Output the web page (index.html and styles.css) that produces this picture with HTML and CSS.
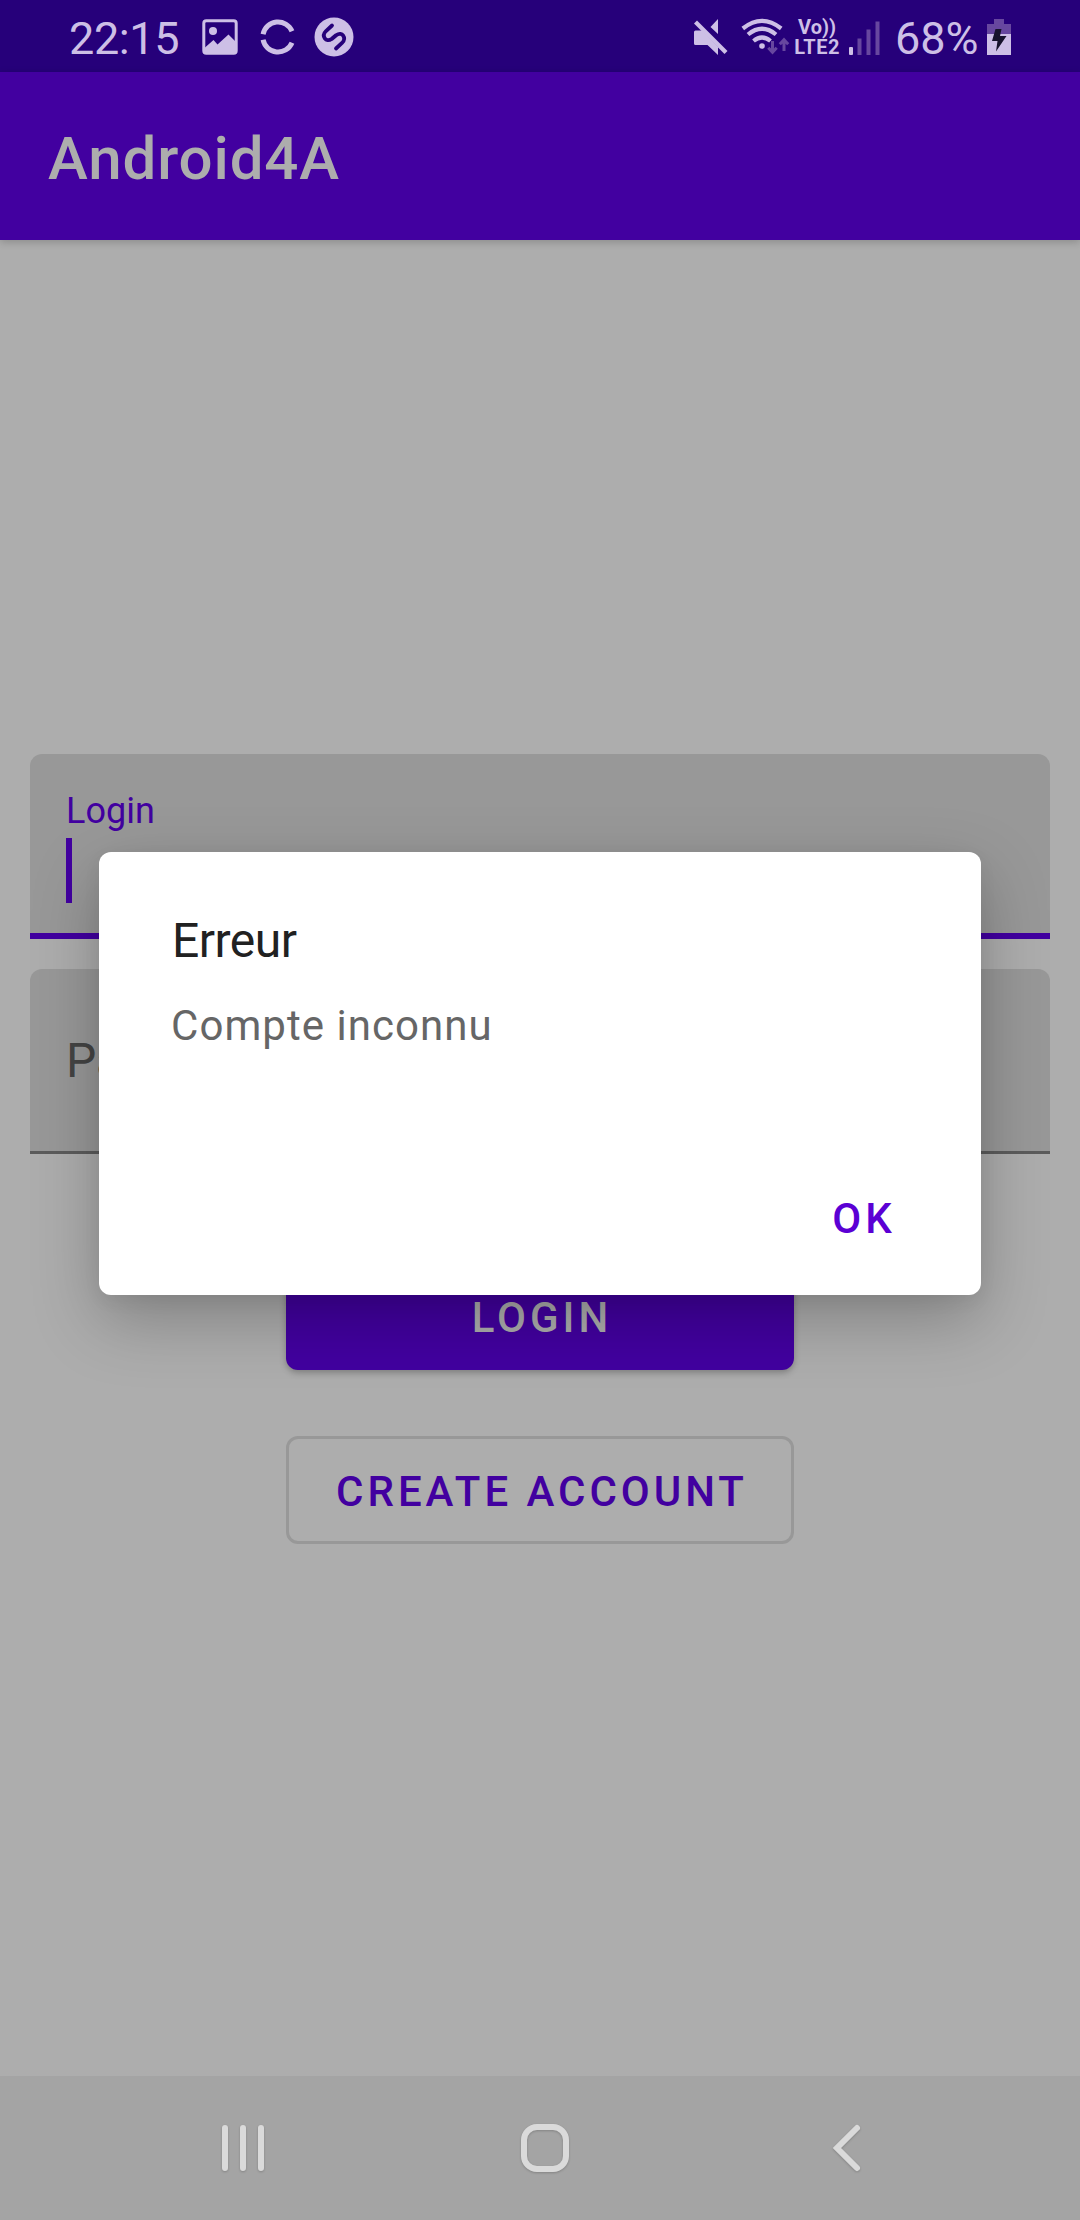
FILE: index.html
```html
<!DOCTYPE html>
<html lang="fr">
<head>
<meta charset="utf-8">
<title>Android4A</title>
<link rel="stylesheet" href="styles.css">
</head>
<body>
<div class="screen">
  <header class="status-bar">
    <div class="status-left">
      <span class="clock">22:15</span>
      <svg class="icon-picture" width="36" height="36" viewBox="0 0 36 36">
        <rect x="1.8" y="1.8" width="32.4" height="32.4" rx="2.5" fill="none" stroke="currentColor" stroke-width="3"/>
        <circle cx="11" cy="12" r="4" fill="currentColor"/>
        <path d="M3 28.500l8.500-7.500 4 4.500L26.500 15.500l7 7V34H3z" fill="currentColor"/>
      </svg>
      <svg class="icon-sync" width="36" height="36" viewBox="0 0 36 36" fill="none" stroke="currentColor" stroke-width="5">
        <path d="M3.100 15.200A15.200 15.200 0 0 1 32 12.200"/>
        <path d="M3.100 20.800A15.200 15.200 0 0 0 32 23.800"/>
      </svg>
      <svg class="icon-music" width="40" height="40" viewBox="0 0 40 40">
        <circle cx="20" cy="20" r="19.500" fill="currentColor"/>
        <path d="M18 8.500L12 14C7 19 12 26 17.500 22L22 18.200M22 31.500L28 26C33 21 28 14 22.500 18L18 21.800" fill="none" stroke="#26007a" stroke-width="3.800" stroke-linecap="round"/>
      </svg>
    </div>
    <div class="status-right">
      <svg class="icon-mute" width="36" height="36" viewBox="0 0 36 36" fill="currentColor">
        <path d="M2.500 11.500h7L25 28v8L14.500 26h-12Q1 26 1 24.500v-11.500Q1 11.500 2.500 11.500zM17.500 8L25 0v15z"/>
        <path d="M2.500 3L33 33.500" stroke="currentColor" stroke-width="4.200"/>
      </svg>
      <svg class="icon-wifi" width="49" height="37" viewBox="0 0 49 37" fill="none" stroke="currentColor" stroke-width="4.200">
        <path d="M1.800 10.500Q21 -4.700 40.200 10.500M7 16.500Q21 5 35 16.500M12.500 23Q21 16 29.500 23"/>
        <circle cx="21" cy="28" r="2.800" fill="currentColor" stroke="none"/>
        <path d="M31.500 23v11M27.300 29.800l4.200 4.500 4.200-4.500M43 33V22M38.800 26.200l4.200-4.500 4.200 4.500" stroke="#67479f" stroke-width="3"/>
      </svg>
      <div class="volte"><span>Vo))</span><span class="volte-network">LTE2</span></div>
      <svg class="icon-signal" width="32" height="36" viewBox="0 0 32 36">
        <rect x="0" y="28" width="4" height="8" rx="1" fill="currentColor"/>
        <path d="M8.500 19.500h4V36h-4zM17.500 10.500h4V36h-4zM26.500 2.500h4V36h-4z" fill="#67479f"/>
      </svg>
      <span class="battery-level">68%</span>
      <svg class="icon-battery" width="24" height="36" viewBox="0 0 24 36">
        <path d="M7 0h10v5h7v10H0V5h7z" fill="#67479f"/>
        <path d="M0 15h24v21H0z" fill="currentColor"/>
        <path d="M8.500 10h6l-1.500 7h6.500L9 32.500 10.500 22H5z" fill="#17132c"/>
      </svg>
    </div>
  </header>

  <div class="app-bar"><h1>Android4A</h1></div>

  <main class="content">
    <div class="field field-focused">
      <label>Login</label>
      <i class="caret"></i>
    </div>
    <div class="field field-empty"><label>Password</label></div>
    <button class="button button-filled">LOGIN</button>
    <button class="button button-outlined">CREATE ACCOUNT</button>
  </main>

  <nav class="nav-bar">
    <svg width="60" height="60" viewBox="0 0 60 60" fill="none" stroke="currentColor" stroke-width="6" stroke-linecap="round">
      <path d="M12 10v40M30 10v40M48 10v40"/>
    </svg>
    <svg width="60" height="60" viewBox="0 0 60 60" fill="none" stroke="currentColor" stroke-width="6">
      <rect x="9" y="9" width="42" height="42" rx="13"/>
    </svg>
    <svg width="60" height="60" viewBox="0 0 60 60" fill="none" stroke="currentColor" stroke-width="6" stroke-linecap="round">
      <path d="M40 10L20 30l20 20"/>
    </svg>
  </nav>

  <section class="dialog" role="alertdialog">
    <h2>Erreur</h2>
    <p>Compte inconnu</p>
    <div class="dialog-actions"><button class="button button-text">OK</button></div>
  </section>
</div>
</body>
</html>
```
FILE: styles.css
```css
* { box-sizing: border-box; }
body { margin: 0; font-family: Roboto, "Liberation Sans", sans-serif; }
h1, h2, p { margin: 0; font-weight: 400; }
svg { display: block; flex: none; }

.screen {
  position: relative;
  display: flex;
  flex-direction: column;
  width: 1080px;
  height: 2220px;
  background: #adadad;
  overflow: hidden;
}

.status-bar {
  display: flex;
  justify-content: space-between;
  height: 72px;
  padding: 1px 69px 0 68px;
  background: #26007a;
  color: #cdbfe6;
}
.status-left, .status-right { display: flex; align-items: center; }
.clock, .battery-level { padding-top: 4px; font-size: 45px; line-height: 60px; }
.clock { width: 112px; padding-left: 1px; letter-spacing: -.4px; }
.icon-picture { margin-left: 22px; }
.icon-sync { margin-left: 22px; }
.icon-music { margin-left: 18px; }
.icon-wifi { margin-left: 12px; }
.volte {
  display: flex;
  flex-direction: column;
  align-items: center;
  width: 46px;
  margin-left: 4px;
  font-size: 20px;
  font-weight: 700;
  line-height: 20px;
}
.volte-network { letter-spacing: .5px; }
.icon-signal { margin-left: 9px; }
.battery-level { width: 82px; margin-left: 14px; }
.icon-battery { margin-left: 10px; }

.app-bar {
  z-index: 1;
  display: flex;
  align-items: center;
  height: 168px;
  padding: 4px 48px 0;
  background: #4200a0;
  color: #adadad;
  box-shadow: 0 2px 8px rgba(0, 0, 0, .2);
}
.app-bar h1 { font-size: 60px; font-weight: 500; letter-spacing: .9px; }

.content {
  flex: 1;
  display: flex;
  flex-direction: column;
  align-items: center;
  padding: 514px 30px 0;
}
.field {
  display: flex;
  flex-direction: column;
  width: 100%;
  height: 185px;
  padding-left: 36px;
  border-radius: 12px 12px 0 0;
  background: #989898;
}
.field-focused {
  padding-top: 36px;
  border-bottom: 6px solid #4200a0;
  color: #4200a0;
  font-size: 36px;
  line-height: 42px;
}
.caret { width: 6px; height: 65px; margin-top: 6px; background: #4200a0; }
.field-empty {
  justify-content: center;
  margin-top: 30px;
  border-bottom: 3px solid #5c5c5c;
  color: #444;
  font-size: 48px;
}

.button {
  padding: 2px 0 0 4px;
  border: 0;
  background: none;
  font-family: inherit;
  font-size: 42px;
  font-weight: 500;
  letter-spacing: 3.97px;
}
.button-filled {
  width: 508px;
  height: 108px;
  margin-top: 108px;
  border-radius: 12px;
  background: #4200a0;
  color: #adadad;
  box-shadow: 0 3px 6px rgba(0, 0, 0, .25);
}
.button-outlined {
  width: 508px;
  height: 108px;
  margin-top: 66px;
  border: 3px solid #989898;
  border-radius: 12px;
  color: #4200a0;
}

.nav-bar {
  display: flex;
  align-items: center;
  justify-content: center;
  gap: 242px;
  height: 144px;
  padding-left: 9px;
  background: #a4a4a4;
  color: #dadada;
}
.nav-bar svg { filter: drop-shadow(0 1px 1px rgba(0, 0, 0, .2)); }

.dialog {
  position: absolute;
  z-index: 2;
  top: 852px;
  left: 99px;
  display: flex;
  flex-direction: column;
  width: 882px;
  height: 443px;
  padding: 61px 72px 24px;
  border-radius: 12px;
  background: #fff;
  box-shadow: 0 24px 66px rgba(0, 0, 0, .26), 0 6px 18px rgba(0, 0, 0, .05);
}
.dialog h2 { padding-left: 1px; color: #212121; font-size: 48px; line-height: 56px; letter-spacing: -.5px; }
.dialog p { margin-top: 32px; color: #666; font-size: 42px; line-height: 50px; letter-spacing: 1.05px; }
.dialog-actions { display: flex; justify-content: flex-end; margin-top: auto; }
.button-text { width: 192px; height: 108px; margin-right: -49px; color: #5b00d4; }
```
